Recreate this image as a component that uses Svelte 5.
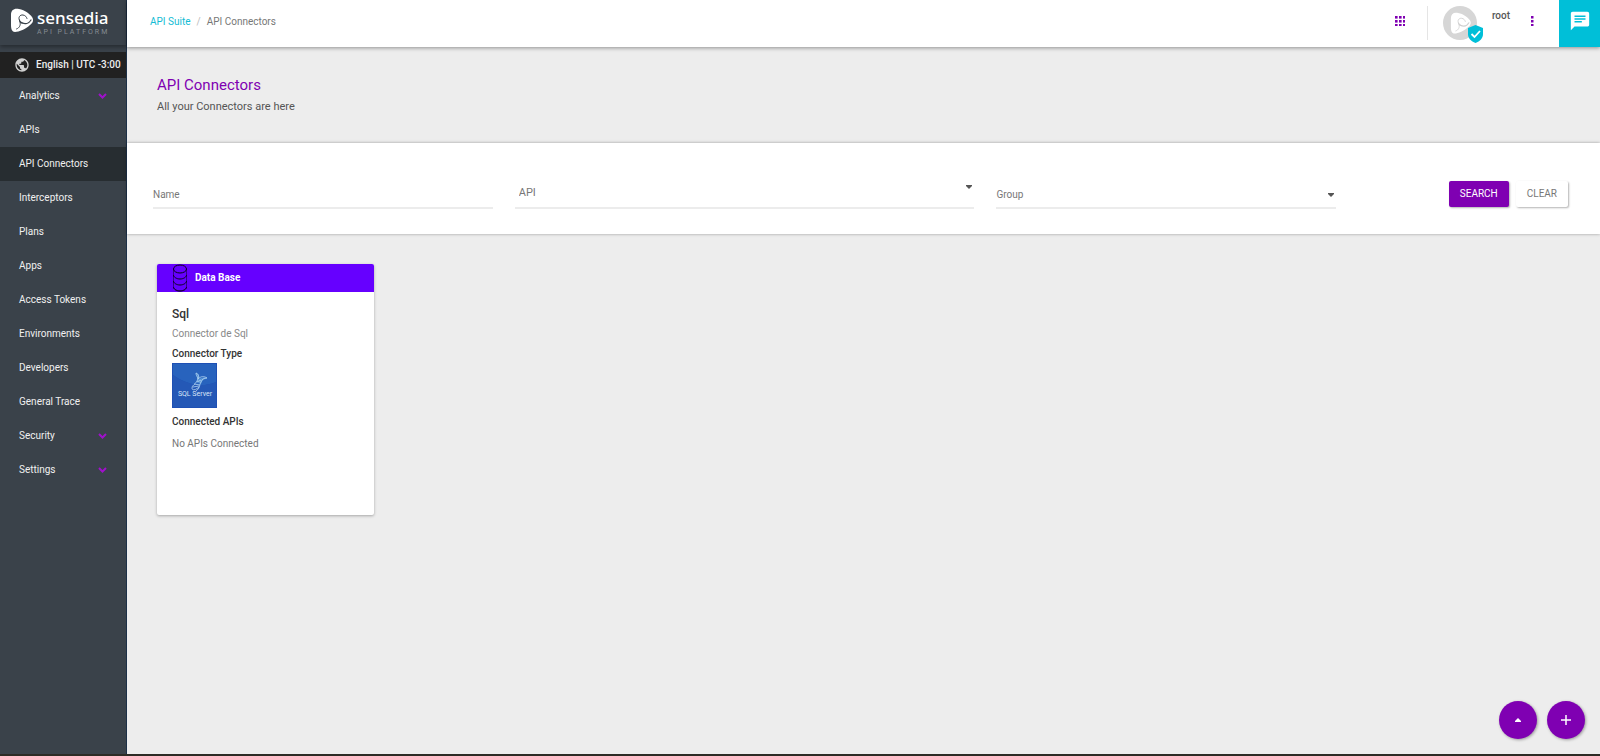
<script>
  const menu = [
    { label: 'Analytics', expandable: true },
    { label: 'APIs' },
    { label: 'API Connectors', active: true },
    { label: 'Interceptors' },
    { label: 'Plans' },
    { label: 'Apps' },
    { label: 'Access Tokens' },
    { label: 'Environments' },
    { label: 'Developers' },
    { label: 'General Trace' },
    { label: 'Security', expandable: true },
    { label: 'Settings', expandable: true },
  ]

  const connectors = [
    { category: 'Data Base', name: 'Sql', description: 'Connector de Sql', apis: [] },
  ]

  let name = $state('')
  let api = $state('')
  let group = $state('')

  function clear() {
    name = ''
    api = ''
    group = ''
  }
</script>

{#snippet swirl(ground)}
  <path fill="#fff" d="M1 7C1 2 4 0 9 1C15 2 20 6 22 9C24 12 23 15 20 17C16 21 9 24 5 24C2 24 1 21 1 17Z" />
  <path fill={ground} d="M9.500 11C10 13 11.500 14.500 14 15C12.500 16 10.500 15.500 9.500 14C8.800 13 8.900 12 9.500 11Z" />
  <g fill="none" stroke={ground} stroke-linecap="round">
    <path d="M9.800 13C7.500 9.500 10 6.500 13 7C15.500 7.400 16.500 9 17 10.500" stroke-width="1" />
    <path d="M11 14.500C15 16.500 19 15.500 21 12" stroke-width="1.200" />
    <path d="M10 14C11 17 9.500 20 6.500 21" stroke-width=".9" />
  </g>
{/snippet}

{#snippet caret()}
  <svg class="caret" width="6" height="4" viewBox="0 0 6 4" aria-hidden="true"><path d="M0 0h6v1L3 4 0 1z" /></svg>
{/snippet}

<div class="page">
  <div class="shell">
    <aside class="sidebar">
      <a class="brand" href="#home" aria-label="Sensedia API Platform">
        <svg width="24" height="25" viewBox="0 0 24 25" aria-hidden="true">{@render swirl('#3a424a')}</svg>
        <span class="brand-text">
          <span class="brand-name">sensedia</span>
          <span class="brand-sub">API PLATFORM</span>
        </span>
      </a>

      <button class="locale">
        <svg width="16" height="16" viewBox="0 0 24 24" fill="#d0d0d0" aria-hidden="true">
          <path d="M12 2C6.480 2 2 6.480 2 12s4.480 10 10 10 10-4.480 10-10S17.520 2 12 2zm-1 17.930c-3.950-.490-7-3.850-7-7.930 0-.620.080-1.210.210-1.790L9 15v1c0 1.100.900 2 2 2v1.930zm6.900-2.540c-.260-.810-1-1.390-1.900-1.390h-1v-3c0-.550-.450-1-1-1H8v-2h2c.550 0 1-.450 1-1V7h2c1.100 0 2-.900 2-2v-.410c2.930 1.190 5 4.060 5 7.410 0 2.080-.800 3.970-2.100 5.390z" />
        </svg>
        English | UTC -3:00
      </button>

      <nav class="menu">
        {#each menu as item}
          <a class="nav-item" class:active={item.active} href="#{item.label}">
            {item.label}
            {#if item.expandable}
              <svg width="9" height="6" viewBox="0 0 9 6" aria-hidden="true"><path d="M1 1l3.500 3.500L8 1" fill="none" stroke="#a010cc" stroke-width="2" /></svg>
            {/if}
          </a>
        {/each}
      </nav>
    </aside>

    <div class="content">
      <header class="topbar">
        <nav class="crumbs" aria-label="Breadcrumb">
          <a href="#suite">API Suite</a>
          <span class="slash">/</span>
          <span>API Connectors</span>
        </nav>

        <div class="tools">
          <button class="icon-btn apps" aria-label="Applications">
            <svg width="10" height="10" viewBox="0 0 10 10" fill="#7f00b2">
              {#each [0, 4, 8] as y}
                {#each [0, 4, 8] as x}
                  <rect {x} {y} width="2.600" height="2.600" />
                {/each}
              {/each}
            </svg>
          </button>
          <div class="user">
            <div class="avatar">
              <svg width="34" height="34" viewBox="0 0 34 34" aria-hidden="true">
                <circle cx="17" cy="17" r="17" fill="#d6d6d6" />
                <g transform="translate(7 6) scale(.9)">{@render swirl('#d0d0d0')}</g>
              </svg>
              <svg class="badge" width="15" height="18" viewBox="0 0 15 18" aria-hidden="true">
                <path d="M7.500 0L15 3v6c0 4-3 7.500-7.500 9C3 16.500 0 13 0 9V3z" fill="#00bfd8" />
                <path d="M3.500 9l3 3 5.500-6" fill="none" stroke="#fff" stroke-width="1.800" />
              </svg>
            </div>
            <span class="user-name">root</span>
          </div>
          <button class="icon-btn more" aria-label="More options">
            <svg width="4" height="10" viewBox="0 0 4 10" fill="#7f00b2"><path d="M1 0h2.500v2.500H1zM1 4h2.500v2.500H1zM1 8h2.500v2H1z" /></svg>
          </button>
          <button class="chat" aria-label="Chat">
            <svg width="22" height="22" viewBox="0 0 24 24" fill="#fff"><path d="M20 2H4c-1.100 0-2 .900-2 2v18l4-4h14c1.100 0 2-.900 2-2V4c0-1.100-.900-2-2-2zM6 6h12v1.500H6zm0 3h12v1.500H6zm0 3h8v1.500H6z" fill-rule="evenodd" /></svg>
          </button>
        </div>
      </header>

      <section class="heading">
        <h1>API Connectors</h1>
        <p>All your Connectors are here</p>
      </section>

      <form class="filters" onsubmit={(e) => e.preventDefault()}>
        <div class="field">
          <input type="text" placeholder="Name" aria-label="Name" bind:value={name} />
        </div>
        <div class="field api">
          <select aria-label="API" bind:value={api}>
            <option value="">API</option>
          </select>
          {@render caret()}
        </div>
        <div class="field">
          <select aria-label="Group" bind:value={group}>
            <option value="">Group</option>
          </select>
          {@render caret()}
        </div>
        <div class="actions">
          <button class="btn primary" type="submit">SEARCH</button>
          <button class="btn" type="button" onclick={clear}>CLEAR</button>
        </div>
      </form>

      <main>
        {#each connectors as c}
          <article class="card">
            <header class="card-header">
              <svg width="16" height="28" viewBox="0 0 16 28" fill="none" stroke="#0a0018" aria-hidden="true">
                <ellipse cx="8" cy="5" rx="6.500" ry="4" />
                <path d="M1.500 5v18c0 2 3 4 6.500 4s6.500-2 6.500-4V5" stroke-opacity=".5" />
                <path d="M1.500 11c0 2 3 4 6.500 4s6.500-2 6.500-4M1.500 17c0 2 3 4 6.500 4s6.500-2 6.500-4M1.500 23c0 2 3 4 6.500 4s6.500-2 6.500-4" />
              </svg>
              {c.category}
            </header>
            <div class="card-body">
              <h2>{c.name}</h2>
              <p class="description">{c.description}</p>
              <h3>Connector Type</h3>
              <svg class="type-logo" width="45" height="45" viewBox="0 0 45 45" role="img" aria-label="SQL Server">
                <rect width="45" height="45" fill="#1e50b4" />
                <path d="M1 1h43v18C28 26 12 20 1 12z" fill="#2863bd" />
                <path d="M1 12c11 8 27 14 43 7v25H1z" fill="#2458b6" />
                <path d="M24 10c3 1 4 4 3 6 3-2 6-2 8 0-4 0-5 2-6 5l-4-2c1-3 0-6-1-9z" fill="#6ba9e0" opacity=".7" />
                <g fill="none" stroke="#b4d6f2" stroke-width=".8">
                  <path d="M24 10c3 1 3 4 2 6 3-3 6-3 9-1-3 0-5 1-6 4-2 4-1 6-5 9" />
                  <path d="M24 10c0 4 3 4 1 8s-5 4-5 7 4 2 7-1M25 19l4-2M22 21l6 1M21 24l6-1" />
                </g>
                <text x="23" y="33" text-anchor="middle" font-size="7" fill="#dbe7f6">SQL Server</text>
              </svg>
              <h3>Connected APIs</h3>
              <p class="apis">{c.apis.length ? c.apis.join(', ') : 'No APIs Connected'}</p>
            </div>
          </article>
        {/each}
      </main>
    </div>
  </div>
  <footer></footer>

  <div class="fabs">
    <button class="fab" aria-label="Back to top">
      <svg width="6" height="4" viewBox="0 0 6 4" fill="#fff"><path d="M3 0l3 3v1H0V3z" /></svg>
    </button>
    <button class="fab" aria-label="Add connector">
      <svg width="10" height="10" viewBox="0 0 10 10"><path d="M5 0v10M0 5h10" stroke="#fff" stroke-width="1.500" /></svg>
    </button>
  </div>
</div>

<style>
  :global(body) {
    margin: 0;
    background: #ededed;
    font-family: Roboto, "Liberation Sans", sans-serif;
    font-size: 10px;
    line-height: 14px;
    color: #555;
  }

  * { box-sizing: border-box; }

  h1, h2, h3, p { margin: 0; }

  a { color: inherit; text-decoration: none; }

  button, input, select { font: inherit; color: inherit; border: 0; background: none; padding: 0; margin: 0; }

  button { cursor: pointer; display: flex; align-items: center; justify-content: center; }

  svg { display: block; flex: none; }

  .page { min-height: 100vh; display: flex; flex-direction: column; }

  .shell { flex: 1; display: flex; }

  footer { height: 2px; background: #2d2b25; }

  .sidebar {
    width: 127px;
    flex: none;
    background: #3a424a;
    border-right: 1px solid #1c3048;
    color: #f0f0f0;
  }

  .brand {
    height: 45px;
    margin-bottom: 7px;
    padding: 8px 0 0 10px;
    display: flex;
    gap: 3px;
    box-shadow: 0 2px 4px rgba(0, 0, 0, 0.35);
  }

  .brand-text { display: flex; flex-direction: column; }

  .brand-name { font-family: "Noto Sans", sans-serif; font-size: 17px; font-weight: 500; line-height: 20px; color: #fff; }

  .brand-sub { font-size: 7px; line-height: 8px; letter-spacing: 2px; color: #858c92; white-space: nowrap; }

  .locale {
    width: 100%;
    height: 26px;
    padding-left: 14px;
    justify-content: flex-start;
    gap: 6px;
    background: #212121;
    color: #eee;
    font-weight: 500;
    white-space: nowrap;
  }

  .menu { padding-top: 1px; }

  .nav-item {
    height: 34px;
    padding: 0 19px;
    display: flex;
    align-items: center;
    justify-content: space-between;
  }

  .nav-item.active { background: #272d31; }

  .content { flex: 1; min-width: 0; }

  .topbar {
    position: relative;
    height: 47px;
    padding-left: 23px;
    display: flex;
    justify-content: space-between;
    background: #fff;
    box-shadow: 0 1px 4px rgba(0, 0, 0, 0.4);
  }

  .crumbs { display: flex; align-items: center; gap: 6px; height: 44px; color: #777; }

  .crumbs a { color: #12bcd4; }

  .slash { color: #bbb; }

  .tools { display: flex; }

  .icon-btn { height: 42px; }

  .apps { width: 10px; margin-right: 22px; }

  .user {
    height: 34px;
    margin-top: 6px;
    padding-left: 15px;
    display: flex;
    gap: 15px;
    border-left: 1px solid #e5e5e5;
  }

  .avatar { position: relative; }

  .badge { position: absolute; right: -6px; bottom: -3px; }

  .user-name { padding-top: 3px; font-weight: 500; }

  .more { width: 4px; margin: 0 25px 0 20px; }

  .chat { width: 41px; padding-bottom: 6px; background: #00bfd8; }

  .heading { height: 96px; padding: 28px 30px 0; }

  h1 { font-size: 15px; line-height: 20px; font-weight: 400; color: #7f00b2; }

  .heading p { margin-top: 4px; font-size: 11px; line-height: 16px; }

  .filters {
    height: 91px;
    padding: 38px 32px 0 26px;
    display: grid;
    grid-template-columns: 34fr 46fr 34fr 21fr;
    align-items: start;
    gap: 22px;
    background: #fff;
    box-shadow: 0 0 3px rgba(0, 0, 0, 0.35);
  }

  .field { position: relative; height: 28px; border-bottom: 2px solid #ececec; }

  .field input, .field select {
    width: 100%;
    height: 26px;
    appearance: none;
    outline: none;
    color: #777;
  }

  .field select { height: 28px; }

  .field input::placeholder { color: #777; opacity: 1; }

  .field :global(.caret) { position: absolute; right: 2px; top: 12px; fill: #555; }

  .api select { height: 24px; padding-left: 4px; font-size: 11px; }

  .api :global(.caret) { top: 4px; }

  .actions { display: flex; justify-content: flex-end; gap: 7px; }

  .btn {
    height: 26px;
    padding: 0 11px;
    border-radius: 2px;
    color: #777;
    box-shadow: 1px 1px 2px rgba(0, 0, 0, 0.3);
  }

  .primary { background: #7f00b2; color: #fff; }

  main { padding: 30px; }

  .card {
    width: 217px;
    height: 251px;
    background: #fff;
    border-radius: 2px;
    box-shadow: 0 1px 3px rgba(0, 0, 0, 0.3);
    overflow: hidden;
  }

  .card-header {
    height: 28px;
    padding-left: 15px;
    display: flex;
    align-items: center;
    gap: 7px;
    background: #6600ff;
    color: #fff;
    font-weight: 700;
  }

  .card-body { padding: 14px 15px; }

  h2 { font-size: 12px; line-height: 16px; font-weight: 500; color: #333; }

  h3 { font-size: 10px; line-height: 14px; font-weight: 500; color: #333; }

  .description { margin: 5px 0 6px; color: #888; }

  .type-logo { margin: 2px 0 7px; font-family: Roboto, sans-serif; }

  .apis { margin-top: 8px; color: #777; }

  .fabs { position: fixed; right: 15px; bottom: 17px; display: flex; gap: 10px; }

  .fab {
    width: 38px;
    height: 38px;
    border-radius: 50%;
    background: #7f00b2;
    box-shadow: 1px 1px 3px rgba(0, 0, 0, 0.35);
  }
</style>
